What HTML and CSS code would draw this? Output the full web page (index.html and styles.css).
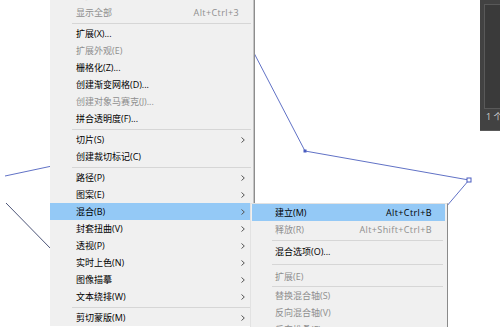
FILE: index.html
```html
<!DOCTYPE html>
<html>
<head>
    <title>对象菜单 - 混合</title>
    <link rel="stylesheet" href="styles.css">
</head>
<body>
<div class="screen">
    <svg class="artwork" width="500" height="327" viewBox="0 0 500 327">
        <polyline class="path" points="254,53 305,151 469,180 446,207"/>
        <line class="path" x1="5" y1="176" x2="52" y2="166"/>
        <line class="path dark" x1="6" y1="203" x2="52" y2="250"/>
        <rect class="anchor" x="303.5" y="149.5" width="3" height="3"/>
        <rect class="anchor open" x="467" y="178" width="4" height="4"/>
    </svg>

    <div class="panel">
        <div class="panel-body"></div>
        <div class="panel-foot">1 个</div>
    </div>

    <div class="menu main">
        <div class="item"><span class="label">隐藏(H)</span><span class="arrow"></span></div>
        <div class="item off"><span class="label">显示全部</span><span class="key">Alt+Ctrl+3</span></div>
        <div class="sep"></div>
        <div class="item"><span class="label">扩展(X)...</span></div>
        <div class="item off"><span class="label">扩展外观(E)</span></div>
        <div class="item"><span class="label">栅格化(Z)...</span></div>
        <div class="item"><span class="label">创建渐变网格(D)...</span></div>
        <div class="item off"><span class="label">创建对象马赛克(J)...</span></div>
        <div class="item"><span class="label">拼合透明度(F)...</span></div>
        <div class="sep"></div>
        <div class="item"><span class="label">切片(S)</span><span class="arrow"></span></div>
        <div class="item"><span class="label">创建裁切标记(C)</span></div>
        <div class="sep"></div>
        <div class="item"><span class="label">路径(P)</span><span class="arrow"></span></div>
        <div class="item"><span class="label">图案(E)</span><span class="arrow"></span></div>
        <div class="item active"><span class="label">混合(B)</span><span class="arrow"></span></div>
        <div class="item"><span class="label">封套扭曲(V)</span><span class="arrow"></span></div>
        <div class="item"><span class="label">透视(P)</span><span class="arrow"></span></div>
        <div class="item"><span class="label">实时上色(N)</span><span class="arrow"></span></div>
        <div class="item"><span class="label">图像描摹</span><span class="arrow"></span></div>
        <div class="item"><span class="label">文本绕排(W)</span><span class="arrow"></span></div>
        <div class="sep"></div>
        <div class="item"><span class="label">剪切蒙版(M)</span><span class="arrow"></span></div>
    </div>

    <div class="menu sub">
        <div class="item active"><span class="label">建立(M)</span><span class="key">Alt+Ctrl+B</span></div>
        <div class="item off"><span class="label">释放(R)</span><span class="key">Alt+Shift+Ctrl+B</span></div>
        <div class="sep"></div>
        <div class="item"><span class="label">混合选项(O)...</span></div>
        <div class="sep wide"></div>
        <div class="item off"><span class="label">扩展(E)</span></div>
        <div class="sep thin"></div>
        <div class="item off"><span class="label">替换混合轴(S)</span></div>
        <div class="item off"><span class="label">反向混合轴(V)</span></div>
        <div class="item off"><span class="label">反向堆叠(F)</span></div>
    </div>
</div>
</body>
</html>
```
FILE: styles.css
```css
html, body {
    width: 100%;
    height: 100%;
    padding: 0px;
    margin: 0px;
    overflow: hidden;
    background-color: #FFF;
}

.screen {
    position: relative;
    width: 500px;
    height: 327px;
    overflow: hidden;
    font-family: "Open Sans", "Noto Sans CJK SC", sans-serif;
    font-size: 9px;
    color: #000;
}

/* artwork on the canvas */
.artwork {
    position: absolute;
    top: 0px;
    left: 0px;
}

.path {
    fill: none;
    stroke: #6172c6;
    stroke-width: 1;
}
.path.dark {
    stroke: #4d5578;
}

.anchor {
    fill: #4a5cc0;
}
.anchor.open {
    fill: #FFF;
    stroke: #4a5cc0;
    stroke-width: 1;
}

/* dark panel at the right */
.panel {
    position: absolute;
    top: 0px;
    left: 480px;
    width: 30px;
    height: 131px;
    background-color: #424242;
    border-bottom: 1px solid #5a5a5a;
    box-sizing: border-box;
    padding: 4px 0px 0px 4px;
}

.panel-body {
    height: 103px;
    border: 1px solid #595959;
    border-right: none;
    background-color: #3a3a3a;
}

.panel-foot {
    padding: 2px 0px 0px 2px;
    color: #d0d0d0;
    font-size: 9px;
    line-height: 12px;
    white-space: nowrap;
}

/* menus */
.menu {
    position: absolute;
    background-color: #f0f0f0;
    box-sizing: border-box;
}

.menu.main {
    top: -13px;
    left: 50px;
    width: 204px;
    padding-right: 2px;
    border-right: 1px solid #c4c4c4;
    box-shadow: 1px 0px 0px #8d8d8d;
}

.menu.sub {
    top: 203px;
    left: 250px;
    width: 198px;
    padding: 0px 2px 0px 1px;
    border-top: 1px solid #e2e2e2;
    border-left: 1px solid #e2e2e2;
    border-right: 1px solid #8a8a8a;
}

.item {
    display: flex;
    align-items: center;
    height: 17px;
    padding: 0px 6px 0px 26px;
    white-space: nowrap;
}
.sub .item {
    padding: 0px 13px 0px 23px;
}

.item.off {
    color: #8e8e8e;
}
.item.active {
    background-color: #94c9f6;
}

.label {
    flex: 1;
}

.key {
    margin-right: 6px;
    letter-spacing: 0.4px;
}
.sub .key {
    margin-right: 0px;
}

.arrow {
    width: 4px;
    height: 6px;
    background: url("data:image/svg+xml;utf8,<svg xmlns='http://www.w3.org/2000/svg' width='4' height='6'><path d='M0.5 0.5 L3.3 3 L0.5 5.5' fill='none' stroke='%23555' stroke-width='1'/></svg>") no-repeat;
}

.sep {
    display: flex;
    align-items: center;
    height: 4px;
    margin-left: 22px;
}
.sub .sep {
    height: 5px;
    margin-left: 20px;
    margin-right: 2px;
}
.sub .sep.wide {
    height: 8px;
}
.sub .sep.thin {
    height: 2px;
}
.sep:before {
    content: '';
    flex: 1;
    height: 1px;
    background-color: #d6d6d6;
}
```
